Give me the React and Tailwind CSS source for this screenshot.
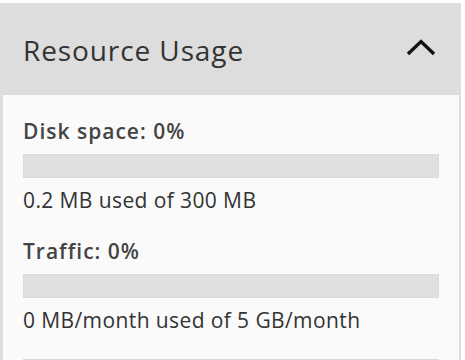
export default function App() {
  const items = [
    { label: 'Disk space: 0%', detail: '0.2 MB used of 300 MB', pct: 0 },
    { label: 'Traffic: 0%', detail: '0 MB/month used of 5 GB/month', pct: 0 },
  ]

  return (
    <div className="bg-white pt-[3px] pr-[4px] h-[360px] overflow-hidden" style={{ fontFamily: '"Open Sans", sans-serif' }}>
      <div className="bg-[#dddddd]">
        <div className="h-[92px] flex items-center justify-between pl-[23px] pr-[24px]">
          <h2 className="text-[28px] tracking-[0.9px] text-[#333333] font-normal leading-none pt-[1px]">Resource Usage</h2>
          <svg width="32" height="20" viewBox="0 0 32 20" className="mt-[-2px]">
            <path d="M3 16 L16 3.5 L29 16" fill="none" stroke="#111" strokeWidth="3.4" />
          </svg>
        </div>
        <div className="mx-[3px] mr-[2px] bg-[#fafafa] pl-[20px] pr-[20px] pt-[24px]">
          {items.map((it) => (
            <div key={it.label} className="pb-[27px]">
              <div className="text-[21px] tracking-[1px] font-semibold text-[#444] leading-[24px]">{it.label}</div>
              <div className="mt-[11px] h-[24px] bg-[#e0e0e0] border border-[#dadada]">
                <div className="h-full bg-[#5cb85c]" style={{ width: `${it.pct}%` }} />
              </div>
              <div className="mt-[10px] text-[21px] tracking-[0.4px] text-[#333] leading-[24px]">{it.detail}</div>
            </div>
          ))}
          <div className="h-[24px] bg-[#e0e0e0] border border-[#dadada]" />
        </div>
      </div>
    </div>
  )
}
